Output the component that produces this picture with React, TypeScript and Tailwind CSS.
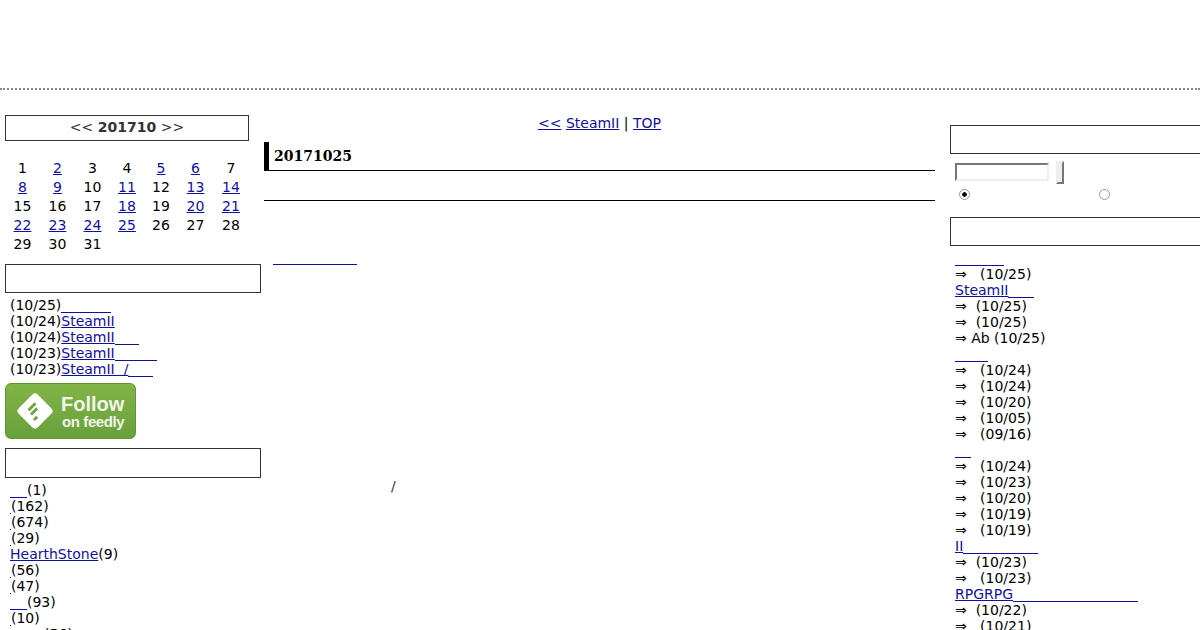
const days: [number, boolean][] = [
  [1, false], [2, true], [3, false], [4, false], [5, true], [6, true], [7, false],
  [8, true], [9, true], [10, false], [11, true], [12, false], [13, true], [14, true],
  [15, false], [16, false], [17, false], [18, true], [19, false], [20, true], [21, true],
  [22, true], [23, true], [24, true], [25, true], [26, false], [27, false], [28, false],
  [29, false], [30, false], [31, false],
]

// the titles in these links are blank in the picture, only the underline shows
function Blank({ w }: { w: number }) {
  return (
    <span
      className="inline-block h-px bg-[#10109f] align-[-3px]"
      style={{ width: w }}
    />
  )
}

function SectionBox({ className }: { className: string }) {
  return <div className={`border border-[#333] ${className}`} />
}

function Row({ children }: { children: React.ReactNode }) {
  return <div className="h-4 whitespace-pre leading-4">{children}</div>
}

function Link({ children }: { children: React.ReactNode }) {
  return <a className="text-[#10109f] underline">{children}</a>
}

function FeedlyButton() {
  return (
    <div className="mt-1.5 flex h-14 w-[131px] items-center rounded-md border border-[#5f9437] bg-linear-to-b from-[#82b548] to-[#68a03c] font-['Liberation_Sans',sans-serif] text-[#f1f6ea]">
      <svg width="38" height="38" viewBox="0 0 38 38" className="ml-[10px]">
        <rect x="5.5" y="5.5" width="27" height="27" rx="4" fill="#fff" transform="rotate(45 19 19)" />
        <path d="M12.5 18.2 L19.5 11.2 M15 22.5 L21.2 16.3 M18 28 L21.2 24.8" stroke="#6fa63e" strokeWidth="3" fill="none" />
      </svg>
      <div className="ml-[7px] flex flex-col font-bold">
        <span className="text-[20px] leading-[22px]">Follow</span>
        <span className="pl-px text-[15px] leading-[14px] tracking-[-0.4px]">on feedly</span>
      </div>
    </div>
  )
}

export default function App() {
  return (
    <div className="h-[630px] overflow-hidden bg-white font-['DejaVu_Sans',sans-serif] text-[14px] text-black">
      <div className="h-[90px] border-b-2 border-dotted border-[#888]" />

      <div className="flex">
        {/* LEFT */}
        <div className="ml-[5px] w-64 shrink-0">
          <div className="mt-[25px] flex h-[26px] w-[244px] items-center justify-center border border-[#333] pb-[2px] text-[#333]">
            &lt;&lt;&nbsp;<b>201710</b>&nbsp;&gt;&gt;
          </div>

          <div className="mt-[18px] grid w-[244px] grid-cols-[35px_35px_35px_34px_34px_35px_36px] auto-rows-[19px] text-center leading-[19px]">
            {days.map(([d, linked]) => (
              <div key={d}>{linked ? <Link>{d}</Link> : d}</div>
            ))}
          </div>

          <SectionBox className="mt-[10px] h-[29px]" />
          <div className="mt-1 pl-[5px]">
            <Row>(10/25)<Blank w={50} /></Row>
            <Row>(10/24)<Link>SteamII</Link></Row>
            <Row>(10/24)<Link>SteamII</Link><Blank w={24} /></Row>
            <Row>(10/23)<Link>SteamII</Link><Blank w={42} /></Row>
            <Row>(10/23)<Link>SteamII&nbsp;&nbsp;/</Link><Blank w={25} /></Row>
          </div>

          <FeedlyButton />

          <SectionBox className="mt-[9px] h-[30px]" />
          <div className="mt-1 pl-[5px]">
            <Row><Blank w={17} />(1)</Row>
            <Row><Blank w={1} />(162)</Row>
            <Row><Blank w={1} />(674)</Row>
            <Row><Blank w={1} />(29)</Row>
            <Row><Link>HearthStone</Link>(9)</Row>
            <Row><Blank w={1} />(56)</Row>
            <Row><Blank w={1} />(47)</Row>
            <Row><Blank w={17} />(93)</Row>
            <Row><Blank w={1} />(10)</Row>
            <Row><Blank w={34} />(56)</Row>
          </div>
        </div>

        {/* CENTER */}
        <div className="ml-[3px] w-[671px] shrink-0">
          <div className="mt-[25px] h-4 text-center leading-4">
            <Link>&lt;&lt;</Link> <Link>SteamII</Link> | <Link>TOP</Link>
          </div>
          <h2 className="mt-[11px] h-[29px] border-b border-l-[5px] border-black pl-[5px] font-['DejaVu_Serif',serif] text-[14px] font-bold leading-[29px]">
            20171025
          </h2>
          <div className="mt-[29px] border-b border-black" />
          <div className="ml-[9px] mt-[48px] h-4 leading-4">
            <Blank w={84} />
          </div>
          <div className="ml-[127px] mt-[213px] h-4 leading-4 text-[#333]">/</div>
        </div>

        {/* RIGHT */}
        <div className="ml-[15px] w-64 shrink-0">
          <SectionBox className="mt-[35px] h-[29px]" />
          <div className="ml-[5px] mt-[7px] flex items-start">
            <input className="mt-[2px] h-[18px] w-[94px] border-2 border-b-[#eee] border-l-[#767676] border-r-[#eee] border-t-[#767676] bg-white" />
            <button className="ml-[7px] h-[23px] w-2 border-2 border-b-[#767676] border-l-[#eee] border-r-[#767676] border-t-[#eee] bg-[#efefef]" />
          </div>
          <div className="ml-[5px] mt-[4px] flex h-[13px] items-center">
            <input
              type="radio"
              defaultChecked
              className="m-0 ml-[4px] size-[11px] appearance-none rounded-full border border-[#999] checked:bg-[radial-gradient(circle,#000_0,#000_2px,transparent_2.5px)]"
            />
            <input
              type="radio"
              className="m-0 ml-[129px] size-[11px] appearance-none rounded-full border border-[#999]"
            />
          </div>
          <SectionBox className="mt-[16px] h-[29px]" />
          <div className="ml-[5px] mt-1">
            <Row><Blank w={49} /></Row>
            <Row>⇒   (10/25)</Row>
            <Row><Link>SteamII</Link><Blank w={26} /></Row>
            <Row>⇒  (10/25)</Row>
            <Row>⇒  (10/25)</Row>
            <Row>⇒ Ab (10/25)</Row>
            <Row><Blank w={33} /></Row>
            <Row>⇒   (10/24)</Row>
            <Row>⇒   (10/24)</Row>
            <Row>⇒   (10/20)</Row>
            <Row>⇒   (10/05)</Row>
            <Row>⇒   (09/16)</Row>
            <Row><Blank w={16} /></Row>
            <Row>⇒   (10/24)</Row>
            <Row>⇒   (10/23)</Row>
            <Row>⇒   (10/20)</Row>
            <Row>⇒   (10/19)</Row>
            <Row>⇒   (10/19)</Row>
            <Row><Link>II</Link><Blank w={75} /></Row>
            <Row>⇒  (10/23)</Row>
            <Row>⇒   (10/23)</Row>
            <Row><Link>RPGRPG</Link><Blank w={125} /></Row>
            <Row>⇒  (10/22)</Row>
            <Row>⇒   (10/21)</Row>
          </div>
        </div>
      </div>
    </div>
  )
}
